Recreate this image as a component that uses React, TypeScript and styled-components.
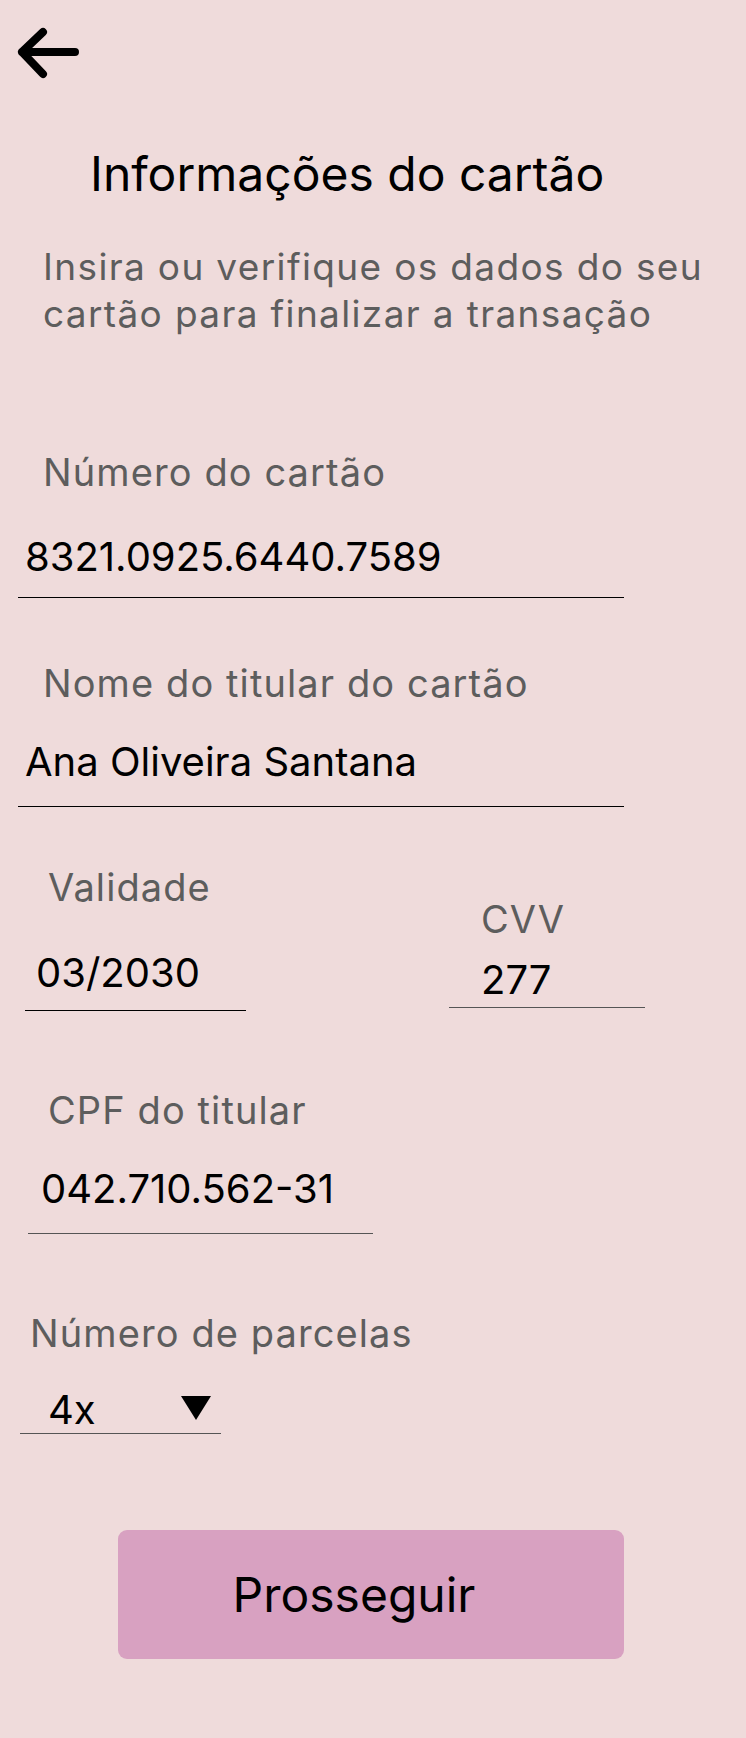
import React from "react";
import styled, { createGlobalStyle } from "styled-components";

const GlobalStyle = createGlobalStyle`
  html, body {
    margin: 0;
    padding: 0;
    background: #efdbdb;
  }
  * {
    box-sizing: border-box;
  }
`;

const Page = styled.div`
  width: 746px;
  min-height: 1738px;
  background: #efdbdb;
  font-family: Inter, "Noto Sans", sans-serif;
  color: #000;
  display: flex;
  flex-direction: column;
`;

const BackButton = styled.button`
  margin: 20px 0 0 10px;
  padding: 0;
  width: 72px;
  height: 64px;
  border: none;
  background: transparent;
  cursor: pointer;
  display: block;
`;

const Title = styled.h1`
  margin: 60px 0 0 0;
  padding-left: 90px;
  font-size: 48px;
  line-height: 60px;
  font-weight: 400;
`;

const Subtitle = styled.p`
  margin: 39px 0 0 0;
  padding: 0 10px 0 43px;
  font-size: 37px;
  line-height: 47px;
  letter-spacing: 1.35px;
  color: #5d5d5d;
`;

interface FieldProps {
  $gap: number;
}

const Field = styled.div<FieldProps>`
  margin-top: ${p => p.$gap}px;
  display: flex;
  flex-direction: column;
  align-items: flex-start;
`;

interface LabelProps {
  $left: number;
}

const Label = styled.label<LabelProps>`
  display: block;
  margin-left: ${p => p.$left}px;
  font-size: 38px;
  line-height: 46px;
  letter-spacing: 1.1px;
  color: #5d5d5d;
`;

interface LineProps {
  $left: number;
  $width: number;
  $pad: number;
  $top: number;
  $bottom: number;
  $gray?: boolean;
}

const InputLine = styled.div<LineProps>`
  margin: ${p => p.$top}px 0 0 ${p => p.$left}px;
  width: ${p => p.$width}px;
  padding: 0 0 ${p => p.$bottom}px ${p => p.$pad}px;
  border-bottom: 1px solid ${p => (p.$gray ? "#555555" : "#000000")};
  display: flex;
  align-items: center;
`;

const Value = styled.span`
  font-size: 40px;
  line-height: 47px;
  color: #000;
  flex: 1;
`;

const Row = styled.div`
  margin-top: 57px;
  display: flex;
  align-items: flex-start;
`;

interface ColProps {
  $offset: number;
  $left: number;
}

const Column = styled.div<ColProps>`
  margin: ${p => p.$offset}px 0 0 ${p => p.$left}px;
  display: flex;
  flex-direction: column;
  align-items: flex-start;
`;

const Caret = styled.span`
  width: 0;
  height: 0;
  margin-right: 10px;
  border-left: 15px solid transparent;
  border-right: 15px solid transparent;
  border-top: 24px solid #000;
  margin-bottom: 4px;
`;

const ButtonWrap = styled.div`
  margin: 96px 0 0 118px;
`;

const PrimaryButton = styled.button`
  width: 506px;
  height: 129px;
  border: none;
  border-radius: 9px;
  background: #d8a1c1;
  font-family: Inter, "Noto Sans", sans-serif;
  font-size: 48px;
  color: #000;
  padding: 0 34px 0 0;
  cursor: pointer;
`;

const BackArrow = () => (
  <svg width="72" height="64" viewBox="0 0 72 64" fill="none">
    <path
      d="M65 32 H12 M33 12 L12 32 L33 54"
      stroke="#000"
      strokeWidth="8"
      strokeLinecap="round"
      strokeLinejoin="round"
    />
  </svg>
);

export default function App() {
  return (
    <>
      <GlobalStyle />
      <Page>
        <BackButton aria-label="Voltar">
          <BackArrow />
        </BackButton>

        <Title>Informações do cartão</Title>
        <Subtitle>
          Insira ou verifique os dados do seu cartão para finalizar a transação
        </Subtitle>

        <Field $gap={112}>
          <Label $left={43}>Número do cartão</Label>
          <InputLine $left={18} $width={606} $pad={7} $top={38} $bottom={17}>
            <Value>8321.0925.6440.7589</Value>
          </InputLine>
        </Field>

        <Field $gap={62}>
          <Label $left={43}>Nome do titular do cartão</Label>
          <InputLine $left={18} $width={606} $pad={7} $top={32} $bottom={21}>
            <Value>Ana Oliveira Santana</Value>
          </InputLine>
        </Field>

        <Row>
          <Column $offset={0} $left={0}>
            <Label $left={48}>Validade</Label>
            <InputLine $left={25} $width={221} $pad={11} $top={39} $bottom={14}>
              <Value>03/2030</Value>
            </InputLine>
          </Column>
          <Column $offset={32} $left={203}>
            <Label $left={32}>CVV</Label>
            <InputLine $left={0} $width={196} $pad={32} $top={14} $bottom={4} $gray>
              <Value>277</Value>
            </InputLine>
          </Column>
        </Row>

        <Field $gap={76}>
          <Label $left={48}>CPF do titular</Label>
          <InputLine $left={28} $width={345} $pad={13} $top={32} $bottom={21} $gray>
            <Value>042.710.562-31</Value>
          </InputLine>
        </Field>

        <Field $gap={76}>
          <Label $left={30}>Número de parcelas</Label>
          <InputLine $left={20} $width={201} $pad={28} $top={30} $bottom={0} $gray>
            <Value>4x</Value>
            <Caret />
          </InputLine>
        </Field>

        <ButtonWrap>
          <PrimaryButton>Prosseguir</PrimaryButton>
        </ButtonWrap>
      </Page>
    </>
  );
}
